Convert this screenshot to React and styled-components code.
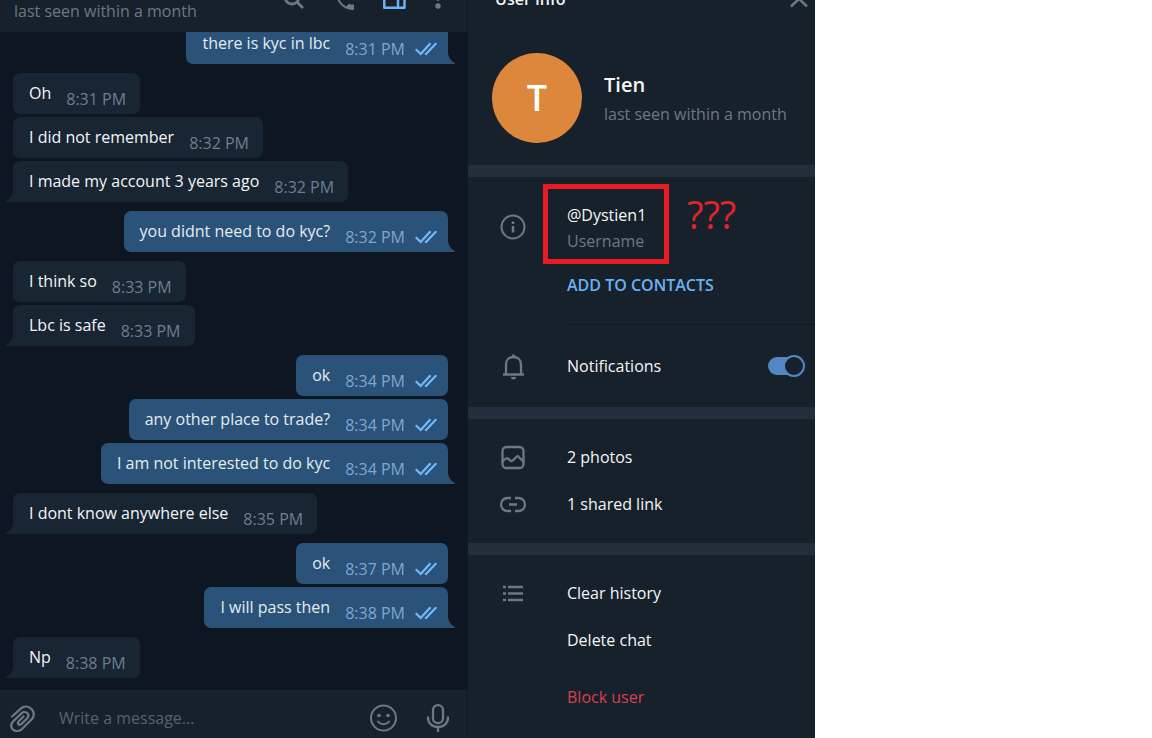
import React, { useState } from "react"
import styled, { createGlobalStyle } from "styled-components"

const GlobalStyle = createGlobalStyle`
    *, *::before, *::after{
        box-sizing:border-box;
    }
    body{
        margin:0;
        background:#fff;
        font-family:"Open Sans", "Noto Sans", sans-serif;
        font-size:16px;
        line-height:24px;
    }
    button, input{
        font:inherit;
        color:inherit;
        border:0;
        padding:0;
        margin:0;
        background:none;
    }
    button{
        cursor:pointer;
        text-align:left;
    }
    svg{
        display:block;
    }
`

const Layout = styled.div`
    display:grid;
    grid-template-columns:468fr 347fr 337fr;
    height:100vh;
    overflow:hidden;
    color:#f5f5f5;
`

const Chat = styled.main`
    display:flex;
    flex-direction:column;
    min-width:0;
    min-height:0;
    background:#0e1621;
    border-right:1px solid #101921;
`

const ChatHeader = styled.header`
    display:flex;
    flex:none;
    justify-content:space-between;
    align-items:flex-end;
    height:32px;
    padding:0 24px 9px 14px;
    background:#17212b;
`

const Muted = styled.span`
    color:#6c7883;
`

const HeaderTools = styled.div`
    display:flex;
    gap:27px;
    padding-bottom:12px;
`

const IconButton = styled.button`
    flex:none;
    color:${({ $active }) => ($active ? "#6ab3f3" : "#6c7883")};
`

const Messages = styled.div`
    display:flex;
    flex:1;
    flex-direction:column;
    justify-content:flex-end;
    gap:9px;
    min-height:0;
    overflow:hidden;
    padding:0 19px 11px 13px;
`

const Group = styled.ul`
    display:flex;
    flex:none;
    flex-direction:column;
    align-items:${({ $out }) => ($out ? "flex-end" : "flex-start")};
    gap:3px;
    list-style:none;
    margin:0;
    padding:0;
`

const Bubble = styled.li`
    position:relative;
    display:flex;
    align-items:center;
    gap:15px;
    height:41px;
    padding:0 ${({ $out }) => ($out ? "11px" : "14px")} 2px 16px;
    border-radius:7px;
    color:${({ $out }) => ($out ? "#e4ecf2" : "#f5f5f5")};
    background:${({ $out }) => ($out ? "#2b5278" : "#182533")};
    &:last-child{
        border-bottom-${({ $out }) => ($out ? "right" : "left")}-radius:0;
    }
`

const Meta = styled.span`
    display:flex;
    align-items:center;
    gap:10px;
    padding-top:12px;
    color:${({ $out }) => ($out ? "#7da8d3" : "#6d7f8f")};
`

const Tail = styled.svg`
    position:absolute;
    bottom:0;
    ${({ $out }) => ($out ? "left:100%;" : "right:100%; transform:scaleX(-1);")}
    fill:${({ $out }) => ($out ? "#2b5278" : "#182533")};
`

const Composer = styled.form`
    display:flex;
    flex:none;
    align-items:center;
    height:49px;
    padding:8px 15px 0 9px;
    background:#17212b;
    border-top:1px solid #101921;
    input{
        flex:1;
        min-width:0;
        margin:0 20px 0 22px;
        outline:none;
        &::placeholder{
            color:#56616c;
            opacity:1;
        }
    }
    button + button{
        margin-left:26px;
    }
`

const Info = styled.aside`
    display:flex;
    flex-direction:column;
    min-width:0;
    overflow:hidden;
    background:#17212b;
`

const InfoHeader = styled.header`
    display:flex;
    flex:none;
    justify-content:space-between;
    align-items:flex-end;
    height:11px;
    padding:0 6px 0 27px;
    h2{
        margin:0;
        font-size:16px;
        line-height:24px;
        font-weight:600;
    }
`

const Profile = styled.section`
    display:flex;
    flex:none;
    align-items:center;
    gap:22px;
    padding:42px 24px 22px;
`

const Avatar = styled.div`
    display:flex;
    flex:none;
    align-items:center;
    justify-content:center;
    width:90px;
    height:90px;
    border-radius:50%;
    background:#dc873c;
    color:#fff;
    font-size:36px;
    font-weight:600;
`

const ProfileText = styled.div`
    min-width:0;
    padding-top:2px;
    white-space:nowrap;
    h3{
        margin:0 0 4px;
        font-size:20px;
        line-height:26px;
        font-weight:600;
    }
`

const Section = styled.section`
    flex:none;
    border-top:12px solid #232e3c;
    padding:${({ $pad }) => $pad};
`

const Row = styled.div`
    position:relative;
    display:grid;
    grid-template-columns:28px 1fr auto;
    column-gap:40px;
    align-items:center;
    min-height:${({ $tall }) => ($tall ? "82px" : "47px")};
    padding:0 10px 0 31px;
    color:#f5f5f5;
    > svg{
        color:#6c7883;
    }
`

const RowButton = styled(Row).attrs({ as: "button" })`
    width:100%;
    margin-top:${({ $danger }) => ($danger ? "10px" : "0")};
    color:${({ $danger }) => ($danger ? "#d8404a" : "#f5f5f5")};
    > span{
        grid-column:2;
    }
`

const UserName = styled.div`
    display:flex;
    flex-direction:column;
    gap:2px;
    padding-top:2px;
`

const AddContact = styled.button`
    display:block;
    margin:5px 0 27px 99px;
    color:#6ab3f3;
    font-weight:600;
`

const Line = styled.hr`
    margin:0 0 0 96px;
    border:0;
    border-top:1px solid #101921;
`

const Marker = styled.div`
    position:absolute;
    top:-2px;
    left:75px;
    width:126px;
    height:80px;
    border:5px solid #e81c24;
    pointer-events:none;
`

const MarkerText = styled.span`
    position:absolute;
    top:4px;
    left:219px;
    color:#e3222a;
    font-size:38px;
    line-height:48px;
`

const Toggle = styled.input`
    appearance:none;
    display:block;
    position:relative;
    width:37px;
    height:22px;
    cursor:pointer;
    &::before{
        content:"";
        position:absolute;
        inset:2px 6px 2px 0;
        border-radius:9px;
        background:${({ checked }) => (checked ? "#5288c1" : "#6c7883")};
    }
    &::after{
        content:"";
        position:absolute;
        top:0;
        ${({ checked }) => (checked ? "right" : "left")}:0;
        width:22px;
        height:22px;
        border-radius:50%;
        border:2px solid ${({ checked }) => (checked ? "#5288c1" : "#6c7883")};
        background:#17212b;
    }
`

const Svg = ({ w = 28, h = 28, children, ...rest }) => (
    <svg width={w} height={h} viewBox={`0 0 ${w} ${h}`} fill="none" stroke="currentColor"
        strokeWidth="2.3" strokeLinecap="round" strokeLinejoin="round" aria-hidden="true" {...rest}>
        {children}
    </svg>
)

const Checks = () => (
    <Svg w={22} h={16} color="#72bcfd" strokeWidth="2.2" strokeLinecap="butt" strokeLinejoin="miter">
        <path d="M.8 8.300l4.900 4.700L15.500 2.200M10.300 13.800L21.300 2.200" />
    </Svg>
)

const history = [
    { out: true, items: [["there is kyc in lbc", "8:31 PM"]] },
    { items: [["Oh", "8:31 PM"], ["I did not remember", "8:32 PM"], ["I made my account 3 years ago", "8:32 PM"]] },
    { out: true, items: [["you didnt need to do kyc?", "8:32 PM"]] },
    { items: [["I think so", "8:33 PM"], ["Lbc is safe", "8:33 PM"]] },
    { out: true, items: [["ok", "8:34 PM"], ["any other place to trade?", "8:34 PM"], ["I am not interested to do kyc", "8:34 PM"]] },
    { items: [["I dont know anywhere else", "8:35 PM"]] },
    { out: true, items: [["ok", "8:37 PM"], ["I will pass then", "8:38 PM"]] },
    { items: [["Np", "8:38 PM"]] },
]

const MessageGroup = ({ out, items }) => (
    <Group $out={out}>
        {items.map(([text, time], i) => (
            <Bubble key={i} $out={out}>
                <span>{text}</span>
                <Meta $out={out}>{time}{out && <Checks />}</Meta>
                {i === items.length - 1 &&
                    <Tail $out={out} width="7" height="12" viewBox="0 0 7 12">
                        <path d="M0 0C0 5 3 9 7 11V12H0Z" />
                    </Tail>}
            </Bubble>
        ))}
    </Group>
)

const App = () => {
    const [notify, setNotify] = useState(true)
    const [draft, setDraft] = useState("")

    return (
        <Layout>
            <GlobalStyle />
            <Chat>
                <ChatHeader>
                    <Muted>last seen within a month</Muted>
                    <HeaderTools>
                        <IconButton aria-label="Search">
                            <Svg w={24} h={24} strokeWidth="2.8" strokeLinecap="butt"><circle cx="12" cy="10" r="7" /><path d="M16.500 14.500l6.500 6.500" /></Svg>
                        </IconButton>
                        <IconButton aria-label="Call">
                            <Svg w={24} h={24} stroke="none" fill="currentColor">
                                <path d="M8.600 12.800c1.400 2.800 3.800 5.100 6.600 6.600l2.200-2.200c.3-.3.700-.4 1-.2 1.100.4 2.300.6 3.600.6.600 0 1 .4 1 1V22c0 .6-.4 1-1 1C12.600 23 5 15.400 5 6c0-.6.400-1 1-1h3.500c.6 0 1 .4 1 1 0 1.200.2 2.400.6 3.600.1.300 0 .700-.3 1z" />
                            </Svg>
                        </IconButton>
                        <IconButton $active aria-label="Toggle user info">
                            <Svg w={24} h={24} strokeWidth="2.5"><path d="M2.300 2h20.200v18.700H2.300zM16 2v18.700" /></Svg>
                        </IconButton>
                        <IconButton aria-label="More">
                            <Svg w={10} h={24} stroke="none" fill="currentColor">
                                <circle cx="5" cy="3" r="2.700" /><circle cx="5" cy="11" r="2.700" /><circle cx="5" cy="19" r="2.700" />
                            </Svg>
                        </IconButton>
                    </HeaderTools>
                </ChatHeader>
                <Messages>
                    {history.map((group, i) => <MessageGroup key={i} {...group} />)}
                </Messages>
                <Composer onSubmit={e => e.preventDefault()}>
                    <IconButton type="button" aria-label="Attach">
                        <Svg>
                            <path d="M3 12.500L11.500 4.800C15 1.700 19.500 2 22.500 5S25.500 12.500 22.500 15.500L13 25C10 28 5.500 27.500 3.500 25S2 19.500 4.500 17L12.500 9.300C14.500 7.500 17 7.700 18.500 9.300S19.500 13 18 14.500L12.500 20C11.500 21 10 21 9.300 20S9 18 10 17L14.500 12.500" />
                        </Svg>
                    </IconButton>
                    <input aria-label="Message" placeholder="Write a message..." value={draft}
                        onChange={e => setDraft(e.target.value)} />
                    <IconButton type="button" aria-label="Emoji">
                        <Svg strokeWidth="2">
                            <circle cx="13.500" cy="14" r="12.500" />
                            <circle cx="9" cy="11.500" r="1.800" fill="currentColor" stroke="none" />
                            <circle cx="18" cy="11.500" r="1.800" fill="currentColor" stroke="none" />
                            <path d="M8 17.500c2.500 3.500 8.500 3.500 11 0" />
                        </Svg>
                    </IconButton>
                    <IconButton type="button" aria-label="Record voice">
                        <Svg>
                            <rect x="9" y="1.200" width="10" height="18" rx="5" />
                            <path d="M4 13.500c0 5.500 4 9.500 10 9.500s10-4 10-9.500M14 23v5" />
                        </Svg>
                    </IconButton>
                </Composer>
            </Chat>

            <Info>
                <InfoHeader>
                    <h2>User Info</h2>
                    <IconButton aria-label="Close">
                        <Svg w={20} h={20} strokeWidth="2.500" strokeLinecap="butt"><path d="M2 0l16 15.500M18 0L2 15.500" /></Svg>
                    </IconButton>
                </InfoHeader>
                <Profile>
                    <Avatar>T</Avatar>
                    <ProfileText>
                        <h3>Tien</h3>
                        <Muted>last seen within a month</Muted>
                    </ProfileText>
                </Profile>

                <Section $pad="9px 0 0">
                    <Row $tall>
                        <Svg strokeWidth="2">
                            <circle cx="14" cy="14" r="11.500" />
                            <path d="M14 13v6.500" strokeWidth="2.500" strokeLinecap="butt" />
                            <path d="M14 8.500v2.500" strokeWidth="2.500" strokeLinecap="butt" />
                        </Svg>
                        <UserName>
                            <span>@Dystien1</span>
                            <Muted>Username</Muted>
                        </UserName>
                        <Marker />
                        <MarkerText>???</MarkerText>
                    </Row>
                    <AddContact>ADD TO CONTACTS</AddContact>
                    <Line />
                    <Row as="label" $tall>
                        <Svg strokeLinecap="butt" strokeLinejoin="miter">
                            <path d="M4 22.500h21M7 22V12.500C7 8 10 5 14.500 5S22 8 22 12.500V22" />
                            <path d="M14.500 5V2.500" strokeWidth="3" />
                            <path d="M12 25h5a2.500 2.500 0 0 1-5 0" fill="currentColor" stroke="none" />
                        </Svg>
                        <span>Notifications</span>
                        <Toggle type="checkbox" checked={notify} onChange={e => setNotify(e.target.checked)} />
                    </Row>
                </Section>

                <Section $pad="14px 0 16px">
                    <RowButton>
                        <Svg>
                            <rect x="3.500" y="4" width="21" height="21" rx="4" />
                            <path d="M3.500 18.500l3.500-3c.6-.5 1.200-.5 1.800 0l2.700 2.200c.6.600 1.300.600 2 0l4-4c.7-.7 1.400-.7 2 0l5 5" />
                        </Svg>
                        <span>2 photos</span>
                    </RowButton>
                    <RowButton>
                        <Svg strokeLinecap="butt">
                            <path d="M12 8H8.500a6.500 6.500 0 0 0 0 13H12M16 8h3.500a6.500 6.500 0 0 1 0 13H16M10 14.500h8" />
                        </Svg>
                        <span>1 shared link</span>
                    </RowButton>
                </Section>

                <Section $pad="14px 0 0">
                    <RowButton>
                        <Svg strokeLinecap="butt">
                            <path d="M4 8h3M9 8h15M4 14.500h3M9 14.500h15M4 21h3M9 21h15" />
                        </Svg>
                        <span>Clear history</span>
                    </RowButton>
                    <RowButton><span>Delete chat</span></RowButton>
                    <RowButton $danger><span>Block user</span></RowButton>
                </Section>
            </Info>
        </Layout>
    )
}

export default App
